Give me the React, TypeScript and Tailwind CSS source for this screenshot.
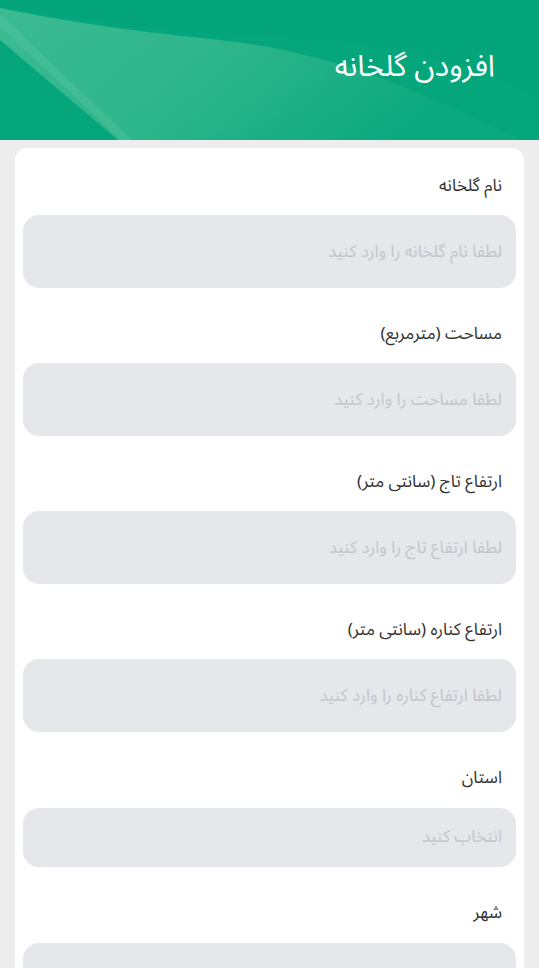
import React from 'react'

const font = { fontFamily: '"Noto Sans Arabic", "Vazirmatn", "DejaVu Sans", sans-serif' }

type Field = { label: string; placeholder: string; kind: 'input' | 'select' }

const fields: Field[] = [
  { label: 'نام گلخانه', placeholder: 'لطفا نام گلخانه را وارد کنید', kind: 'input' },
  { label: 'مساحت (مترمربع)', placeholder: 'لطفا مساحت را وارد کنید', kind: 'input' },
  { label: 'ارتفاع تاج (سانتی متر)', placeholder: 'لطفا ارتفاع تاج را وارد کنید', kind: 'input' },
  { label: 'ارتفاع کناره (سانتی متر)', placeholder: 'لطفا ارتفاع کناره را وارد کنید', kind: 'input' },
  { label: 'استان', placeholder: 'انتخاب کنید', kind: 'select' },
  { label: 'شهر', placeholder: 'انتخاب کنید', kind: 'select' },
]

function HeaderWaves() {
  return (
    <svg className="absolute inset-0 h-full w-full" viewBox="0 0 539 140" preserveAspectRatio="none">
      <defs>
        <linearGradient id="band" x1="0" y1="0" x2="1" y2="0.3">
          <stop offset="0" stopColor="#3fbc93" />
          <stop offset="0.5" stopColor="#2fb68b" />
          <stop offset="1" stopColor="#0aa87d" />
        </linearGradient>
      </defs>
      <path d="M0 8 C 60 20, 120 30, 220 40 C 330 52, 420 90, 520 140 L 118 140 L 0 40 Z" fill="url(#band)" opacity="0.95" />
      <path d="M0 14 L 0 26 L 120 140 L 132 140 Z" fill="#5cc6a2" opacity="0.35" />
      <path d="M0 0 L 539 0 L 539 100 C 470 60, 380 40, 250 35 C 150 30, 80 18, 0 6 Z" fill="#04a47a" opacity="0.35" />
    </svg>
  )
}

export default function App() {
  return (
    <div dir="rtl" className="min-h-screen bg-[#ededed]" style={font}>
      <header className="relative h-[140px] overflow-hidden bg-[#05a67b]">
        <HeaderWaves />
        <h1 className="relative pr-[44px] pt-[47px] text-[30px] leading-[40px] text-white">افزودن گلخانه</h1>
      </header>

      <div className="mx-[15px] mt-2 rounded-xl bg-white px-2 pt-[26px] pb-6">
        {fields.map((f, i) => (
          <div key={f.label} className="mb-[34px]">
            <label className="block pr-[14px] text-[17px] leading-6 text-[#333]">{f.label}</label>
            {f.kind === 'input' ? (
              <input
                dir="rtl"
                placeholder={f.placeholder}
                className="mt-[17px] block h-[73px] w-full rounded-2xl bg-[#e6e7eb] pr-[14px] text-[17px] text-[#333] outline-none placeholder:text-[#c4c5ca]"
                style={font}
              />
            ) : (
              <div
                className={
                  i === fields.length - 1
                    ? 'mt-[18px] flex h-[76px] items-center rounded-2xl bg-[#e6e7eb] pr-[14px] text-[17px] leading-[17px] text-[#c4c5ca]'
                    : 'mt-[18px] flex h-[59px] items-center rounded-2xl bg-[#e6e7eb] pr-[14px] text-[17px] text-[#c4c5ca]'
                }
              >
                {f.placeholder}
              </div>
            )}
          </div>
        ))}
      </div>
    </div>
  )
}
